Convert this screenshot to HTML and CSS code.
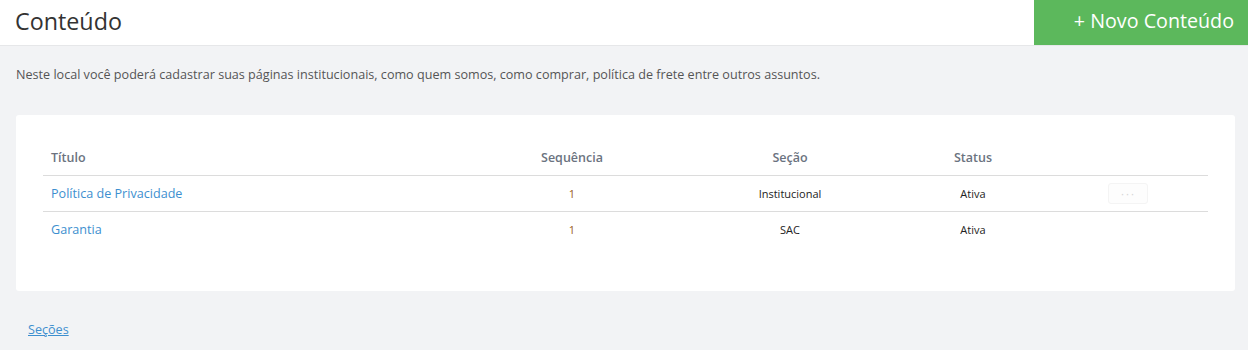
FILE: index.html
```html
<!DOCTYPE html>
<html lang="pt-BR">
<head>
    <meta charset="utf-8">
    <link rel="stylesheet" href="styles.css">
    <title>Conteúdo</title>
</head>
<body>
    <header class="page-header">
        <h1>Conteúdo</h1>
        <button type="button" class="btn-new">+ Novo Conteúdo</button>
    </header>

    <p class="intro">Neste local você poderá cadastrar suas páginas institucionais, como quem somos, como comprar, política de frete entre outros assuntos.</p>

    <div class="card">
        <table class="content-table">
            <colgroup>
                <col class="col-title">
                <col class="col-seq">
                <col class="col-section">
                <col class="col-status">
                <col class="col-actions">
            </colgroup>
            <thead>
                <tr>
                    <th class="left">Título</th>
                    <th>Sequência</th>
                    <th>Seção</th>
                    <th>Status</th>
                    <th></th>
                </tr>
            </thead>
            <tbody>
                <tr>
                    <td class="left"><a href="#">Política de Privacidade</a></td>
                    <td class="seq">1</td>
                    <td>Institucional</td>
                    <td>Ativa</td>
                    <td><button type="button" class="btn-more">&middot;&middot;&middot;</button></td>
                </tr>
                <tr>
                    <td class="left"><a href="#">Garantia</a></td>
                    <td class="seq">1</td>
                    <td>SAC</td>
                    <td>Ativa</td>
                    <td></td>
                </tr>
            </tbody>
        </table>
    </div>

    <a href="#" class="footer-link">Seções</a>
</body>
</html>
```

FILE: styles.css
```css
body {
    margin: 0;
    background: #f2f3f5;
    font-family: "Open Sans", sans-serif;
    color: #333;
}

.page-header {
    height: 45px;
    background: #fff;
    border-bottom: 1px solid #e6e7e9;
    display: flex;
    align-items: center;
    justify-content: space-between;
}

.page-header h1 {
    margin: 0 0 3px 15px;
    font-size: 23.3px;
    font-weight: 400;
    color: #333;
}

.btn-new {
    align-self: stretch;
    width: 214px;
    background: #5cb85c;
    border: none;
    color: #fff;
    font-family: "Open Sans", sans-serif;
    font-size: 19.7px;
    text-align: right;
    padding: 0 14px 4px 0;
    cursor: pointer;
}

.intro {
    margin: 0;
    padding: 20px 16px 0;
    font-size: 12.6px;
    line-height: 18px;
    color: #555;
}

.card {
    margin: 31px 13px 0 16px;
    background: #fff;
    border-radius: 3px;
    padding: 25px 27px 44px;
}

.content-table {
    width: 100%;
    border-collapse: collapse;
    table-layout: fixed;
}

.col-title { width: 419px; }
.col-seq { width: 220px; }
.col-section { width: 216px; }
.col-status { width: 150px; }

.content-table th {
    height: 35px;
    font-size: 12.5px;
    font-weight: 600;
    color: #6b7380;
    text-align: center;
    border-bottom: 1px solid #dcdcdc;
    padding: 0 8px;
}

.content-table td {
    height: 35px;
    font-size: 11px;
    color: #222;
    text-align: center;
    padding: 0 8px;
}

.content-table tbody tr + tr td {
    border-top: 1px solid #dcdcdc;
}

.content-table .left {
    text-align: left;
}

.content-table a {
    font-size: 12.6px;
    color: #3d8fcf;
    text-decoration: none;
}

.content-table .seq {
    color: #9a5c24;
}

.btn-more {
    width: 40px;
    height: 21px;
    background: #fdfdfd;
    border: 1px solid #f4f4f4;
    border-radius: 3px;
    color: #d6d6d6;
    font-size: 12px;
    letter-spacing: 1px;
    line-height: 1;
    padding: 0;
}

.footer-link {
    display: inline-block;
    margin: 30px 0 0 28px;
    font-size: 12.6px;
    color: #3d8fcf;
}
```
